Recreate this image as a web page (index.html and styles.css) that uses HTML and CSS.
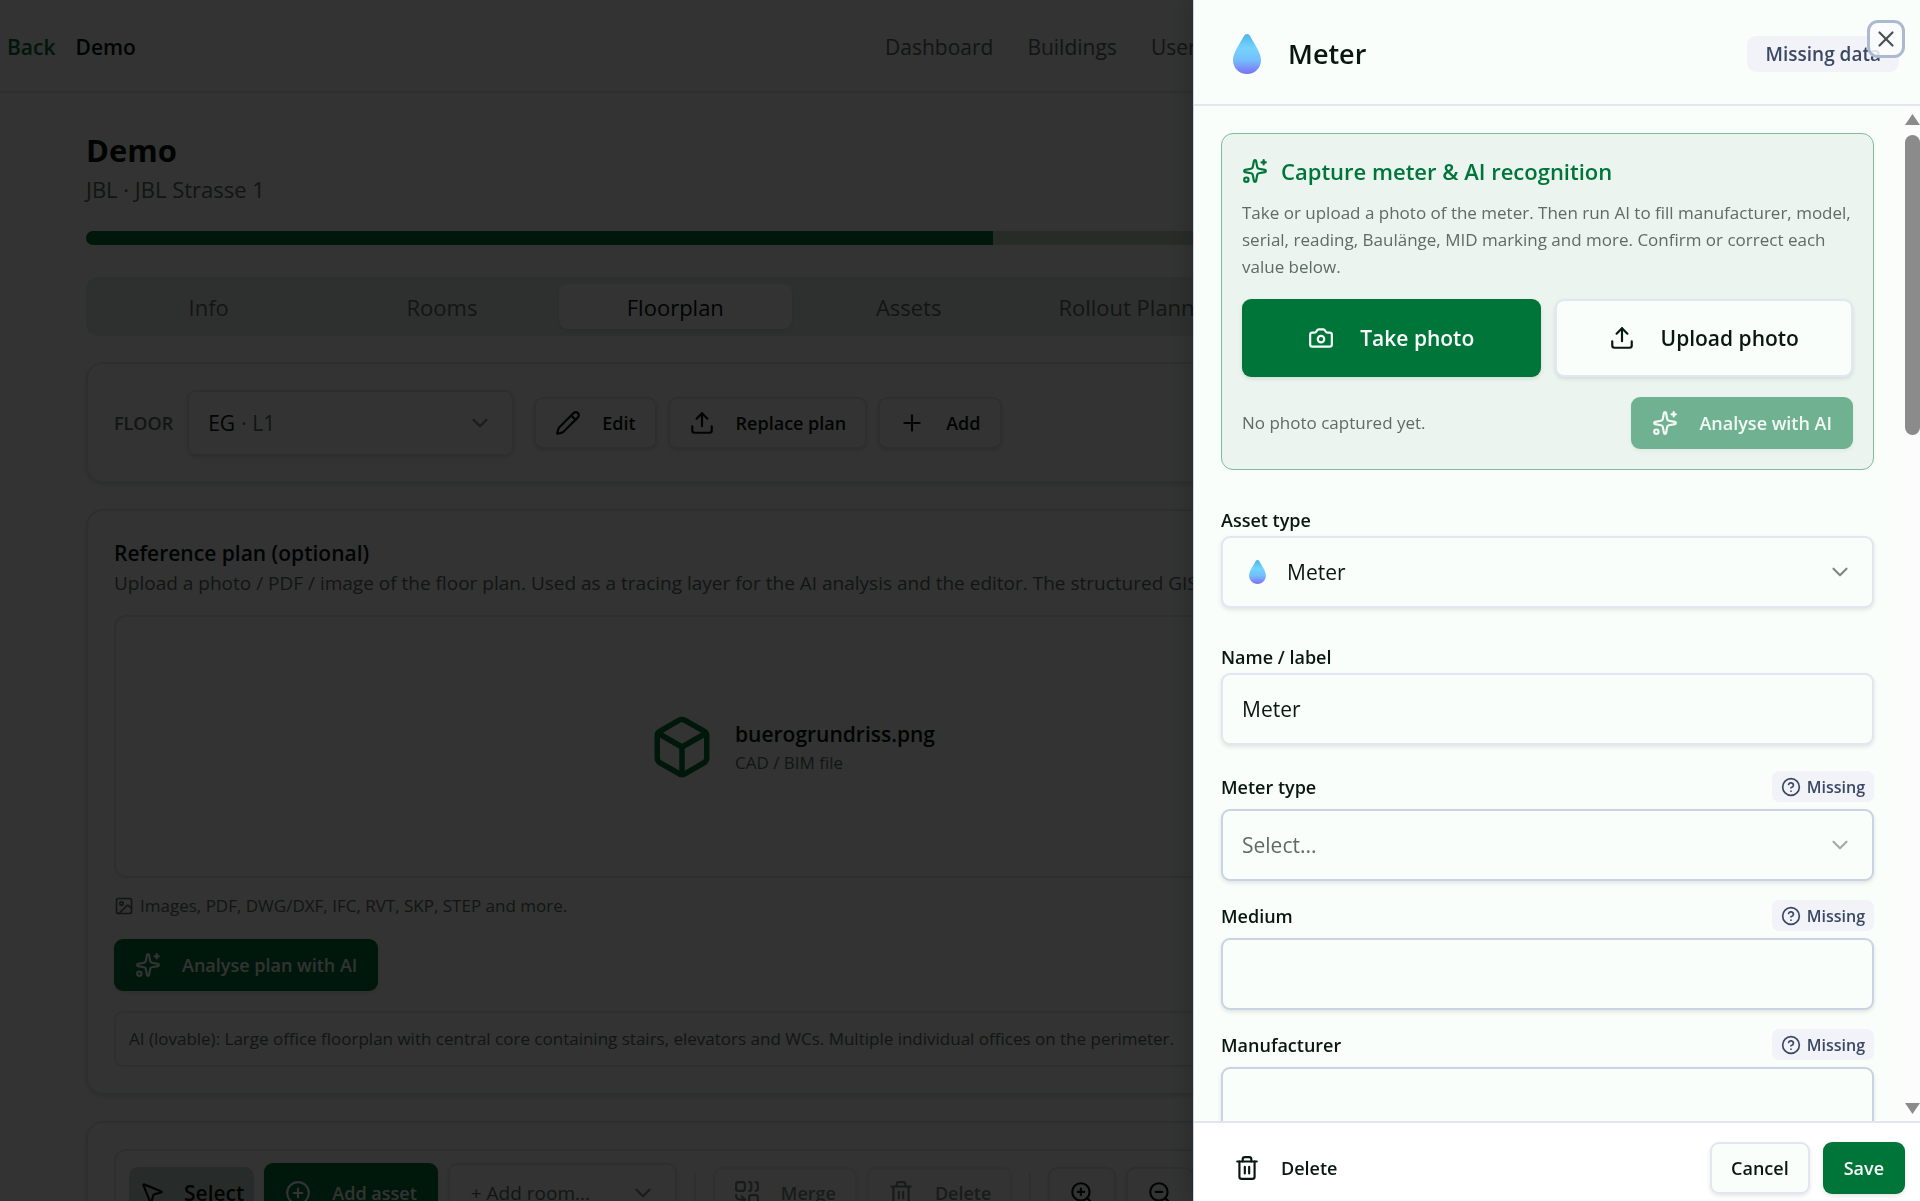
FILE: index.html
```html
<!DOCTYPE html>
<html lang="en">
<head>
<meta charset="utf-8">
<meta name="viewport" content="width=device-width, initial-scale=1">
<title>Demo – Floorplan</title>
<link rel="stylesheet" href="styles.css">
</head>
<body>
<svg class="sprite" aria-hidden="true">
  <symbol id="i-sparkles" viewBox="0 0 24 24"><path d="M11.017 2.814a1 1 0 0 1 1.966 0l1.051 5.558a2 2 0 0 0 1.594 1.594l5.558 1.051a1 1 0 0 1 0 1.966l-5.558 1.051a2 2 0 0 0-1.594 1.594l-1.051 5.558a1 1 0 0 1-1.966 0l-1.051-5.558a2 2 0 0 0-1.594-1.594l-5.558-1.051a1 1 0 0 1 0-1.966l5.558-1.051a2 2 0 0 0 1.594-1.594z"/><path d="M20 2v4"/><path d="M22 4h-4"/><circle cx="4" cy="20" r="2"/></symbol>
  <symbol id="i-camera" viewBox="0 0 24 24"><path d="M13.997 4a2 2 0 0 1 1.76 1.05l.486.9A2 2 0 0 0 18.003 7H20a2 2 0 0 1 2 2v9a2 2 0 0 1-2 2H4a2 2 0 0 1-2-2V9a2 2 0 0 1 2-2h1.997a2 2 0 0 0 1.759-1.048l.489-.904A2 2 0 0 1 10.004 4z"/><circle cx="12" cy="13" r="3"/></symbol>
  <symbol id="i-upload" viewBox="0 0 24 24"><path d="M12 3v12"/><path d="m17 8-5-5-5 5"/><path d="M21 15v4a2 2 0 0 1-2 2H5a2 2 0 0 1-2-2v-4"/></symbol>
  <symbol id="i-pencil" viewBox="0 0 24 24"><path d="M21.174 6.812a1 1 0 0 0-3.986-3.987L3.842 16.174a2 2 0 0 0-.5.83l-1.321 4.352a.5.5 0 0 0 .623.622l4.353-1.32a2 2 0 0 0 .83-.497z"/><path d="m15 5 4 4"/></symbol>
  <symbol id="i-plus" viewBox="0 0 24 24"><path d="M5 12h14"/><path d="M12 5v14"/></symbol>
  <symbol id="i-chevron" viewBox="0 0 24 24"><path d="m6 9 6 6 6-6"/></symbol>
  <symbol id="i-box" viewBox="0 0 24 24"><path d="M21 8a2 2 0 0 0-1-1.730l-7-4a2 2 0 0 0-2 0l-7 4A2 2 0 0 0 3 8v8a2 2 0 0 0 1 1.730l7 4a2 2 0 0 0 2 0l7-4A2 2 0 0 0 21 16Z"/><path d="m3.300 7 8.700 5 8.700-5"/><path d="M12 22V12"/></symbol>
  <symbol id="i-image" viewBox="0 0 24 24"><rect x="3" y="3" width="18" height="18" rx="2"/><circle cx="9" cy="9" r="2"/><path d="m21 15-3.086-3.086a2 2 0 0 0-2.828 0L6 21"/></symbol>
  <symbol id="i-pointer" viewBox="0 0 24 24"><path d="M4.037 4.688a.495.495 0 0 1 .651-.651l16 6.500a.5.5 0 0 1-.063.947l-6.124 1.580a2 2 0 0 0-1.438 1.435l-1.579 6.126a.5.5 0 0 1-.947.063z"/></symbol>
  <symbol id="i-circle-plus" viewBox="0 0 24 24"><circle cx="12" cy="12" r="10"/><path d="M8 12h8"/><path d="M12 8v8"/></symbol>
  <symbol id="i-combine" viewBox="0 0 24 24"><path d="M10 18H5a3 3 0 0 1-3-3v-1"/><path d="M14 2a2 2 0 0 1 2 2v4a2 2 0 0 1-2 2"/><path d="M20 2a2 2 0 0 1 2 2v4a2 2 0 0 1-2 2"/><path d="m7 21 3-3-3-3"/><rect x="14" y="14" width="8" height="8" rx="2"/><rect x="2" y="2" width="8" height="8" rx="2"/></symbol>
  <symbol id="i-trash" viewBox="0 0 24 24"><path d="M10 11v6"/><path d="M14 11v6"/><path d="M19 6v14a2 2 0 0 1-2 2H7a2 2 0 0 1-2-2V6"/><path d="M3 6h18"/><path d="M8 6V4a2 2 0 0 1 2-2h4a2 2 0 0 1 2 2v2"/></symbol>
  <symbol id="i-zoom-in" viewBox="0 0 24 24"><circle cx="11" cy="11" r="8"/><path d="m21 21-4.350-4.350"/><path d="M11 8v6"/><path d="M8 11h6"/></symbol>
  <symbol id="i-zoom-out" viewBox="0 0 24 24"><circle cx="11" cy="11" r="8"/><path d="m21 21-4.350-4.350"/><path d="M8 11h6"/></symbol>
  <symbol id="i-help" viewBox="0 0 24 24"><circle cx="12" cy="12" r="10"/><path d="M9.090 9a3 3 0 0 1 5.830 1c0 2-3 3-3 3"/><path d="M12 17h.01"/></symbol>
  <symbol id="i-close" viewBox="0 0 24 24"><path d="M18 6 6 18"/><path d="m6 6 12 12"/></symbol>
  <linearGradient id="drop-fill" x1="0" y1="0" x2="0" y2="1"><stop offset="0" stop-color="#4fb4ea"/><stop offset=".35" stop-color="#74d3fd"/><stop offset=".65" stop-color="#74bffd"/><stop offset="1" stop-color="#7a70f5"/></linearGradient>
  <symbol id="i-drop" viewBox="0 0 28 40"><path fill="url(#drop-fill)" stroke="none" d="M14 0c1.300 0 2.400.8 3.200 2.200C21 9.500 28 18.500 28 26c0 8-6 14-14 14S0 34 0 26C0 18.500 7 9.500 10.800 2.200 11.600.8 12.700 0 14 0z"/></symbol>
</svg>

<div class="page">
  <header class="topbar">
    <div class="brand"><a class="back" href="#">Back</a><span>Demo</span></div>
    <nav class="nav"><a href="#">Dashboard</a><a href="#">Buildings</a><a href="#">Users</a></nav>
  </header>
  <main class="content">
    <div>
      <h1 class="title">Demo</h1>
      <p class="address">JBL · JBL Strasse 1</p>
    </div>
    <div class="progress"><div class="progress-value" style="width:64.2%"></div></div>
    <div class="tabs" role="tablist">
      <button class="tab" role="tab">Info</button>
      <button class="tab" role="tab">Rooms</button>
      <button class="tab active" role="tab" aria-selected="true">Floorplan</button>
      <button class="tab" role="tab">Assets</button>
      <button class="tab" role="tab">Rollout Planning</button>
      <button class="tab" role="tab">Reports</button>
    </div>

    <section class="card floor-bar">
      <label class="floor-label" for="floor">FLOOR</label>
      <div class="select floor-select">
        <select id="floor"><option>EG</option></select>
        <span class="select-hint">· L1</span>
        <svg class="icon chevron"><use href="#i-chevron"/></svg>
      </div>
      <div class="actions">
        <button class="btn outline"><svg class="icon"><use href="#i-pencil"/></svg>Edit</button>
        <button class="btn outline"><svg class="icon"><use href="#i-upload"/></svg>Replace plan</button>
        <button class="btn outline"><svg class="icon"><use href="#i-plus"/></svg>Add</button>
      </div>
    </section>

    <section class="card plan">
      <h2 class="card-title">Reference plan (optional)</h2>
      <p class="card-text">Upload a photo / PDF / image of the floor plan. Used as a tracing layer for the AI analysis and the editor. The structured GIS model is stored.</p>
      <div class="preview">
        <svg class="icon box-icon"><use href="#i-box"/></svg>
        <div><p class="file-name">buerogrundriss.png</p><p class="file-kind">CAD / BIM file</p></div>
      </div>
      <p class="formats"><svg class="icon small"><use href="#i-image"/></svg>Images, PDF, DWG/DXF, IFC, RVT, SKP, STEP and more.</p>
      <button class="btn primary"><svg class="icon"><use href="#i-sparkles"/></svg>Analyse plan with AI</button>
      <p class="ai-note">AI (lovable): Large office floorplan with central core containing stairs, elevators and WCs. Multiple individual offices on the perimeter.</p>
    </section>

    <section class="card">
      <div class="toolbar">
        <button class="btn soft"><svg class="icon"><use href="#i-pointer"/></svg>Select</button>
        <button class="btn primary tall"><svg class="icon"><use href="#i-circle-plus"/></svg>Add asset</button>
        <div class="select room-select">
          <select aria-label="Add room"><option>+ Add room...</option></select>
          <svg class="icon chevron"><use href="#i-chevron"/></svg>
        </div>
        <span class="separator"></span>
        <button class="btn outline" disabled><svg class="icon"><use href="#i-combine"/></svg>Merge</button>
        <button class="btn outline" disabled><svg class="icon"><use href="#i-trash"/></svg>Delete</button>
        <span class="separator"></span>
        <button class="btn outline" aria-label="Zoom in"><svg class="icon"><use href="#i-zoom-in"/></svg></button>
        <button class="btn outline" aria-label="Zoom out"><svg class="icon"><use href="#i-zoom-out"/></svg></button>
      </div>
    </section>
  </main>
</div>

<div class="overlay"></div>

<aside class="drawer" role="dialog" aria-labelledby="drawer-title">
  <header class="drawer-head">
    <svg class="drop-large"><use href="#i-drop"/></svg>
    <h2 id="drawer-title">Meter</h2>
    <span class="status">Missing data</span>
    <button class="close" aria-label="Close"><svg class="icon"><use href="#i-close"/></svg></button>
  </header>

  <div class="drawer-main">
    <form class="drawer-body">
      <section class="capture">
        <h3><svg class="icon"><use href="#i-sparkles"/></svg>Capture meter &amp; AI recognition</h3>
        <p class="capture-text">Take or upload a photo of the meter. Then run AI to fill manufacturer, model, serial, reading, Baulänge, MID marking and more. Confirm or correct each value below.</p>
        <div class="capture-buttons">
          <button type="button" class="btn primary big"><svg class="icon"><use href="#i-camera"/></svg>Take photo</button>
          <button type="button" class="btn outline big"><svg class="icon"><use href="#i-upload"/></svg>Upload photo</button>
        </div>
        <div class="capture-foot">
          <span>No photo captured yet.</span>
          <button type="button" class="btn primary" disabled><svg class="icon"><use href="#i-sparkles"/></svg>Analyse with AI</button>
        </div>
      </section>

      <div class="field">
        <div class="field-head"><label for="asset-type">Asset type</label></div>
        <div class="select with-drop">
          <select id="asset-type"><option>Meter</option></select>
          <svg class="drop-small"><use href="#i-drop"/></svg>
          <svg class="icon chevron"><use href="#i-chevron"/></svg>
        </div>
      </div>
      <div class="field">
        <div class="field-head"><label for="name">Name / label</label></div>
        <input id="name" type="text" value="Meter">
      </div>
      <div class="field missing">
        <div class="field-head"><label for="meter-type">Meter type</label><span class="badge"><svg class="icon small"><use href="#i-help"/></svg>Missing</span></div>
        <div class="select placeholder">
          <select id="meter-type"><option>Select...</option></select>
          <svg class="icon chevron"><use href="#i-chevron"/></svg>
        </div>
      </div>
      <div class="field missing">
        <div class="field-head"><label for="medium">Medium</label><span class="badge"><svg class="icon small"><use href="#i-help"/></svg>Missing</span></div>
        <input id="medium" type="text">
      </div>
      <div class="field missing">
        <div class="field-head"><label for="manufacturer">Manufacturer</label><span class="badge"><svg class="icon small"><use href="#i-help"/></svg>Missing</span></div>
        <input id="manufacturer" type="text">
      </div>
    </form>
    <div class="scrollbar" aria-hidden="true">
      <span class="arrow up"></span>
      <span class="thumb"></span>
      <span class="arrow down"></span>
    </div>
  </div>

  <footer class="drawer-foot">
    <button class="btn ghost"><svg class="icon"><use href="#i-trash"/></svg>Delete</button>
    <button class="btn outline">Cancel</button>
    <button class="btn primary">Save</button>
  </footer>
</aside>
</body>
</html>
```
FILE: styles.css
```css
:root {
  --green: #00753a;
  --bg: #fafefb;
  --ink: #0a1711;
  --muted: #5f6b65;
  --line: #e2e6f0;
  --line-strong: #c8d3e3;
  --soft: #e6efeb;
  --slate: #3b4763;
  --text-xs: 17px;
  --text-sm: 18px;
  --text-md: 21px;
  --text-lg: 22px;
  --shadow: 0 2px 4px rgba(0, 0, 0, .1);
}

* { box-sizing: border-box; }

html, body { height: 100%; }

body {
  margin: 0;
  overflow: hidden;
  background: var(--bg);
  color: var(--ink);
  font: 400 21px/30px "Segoe UI", "Open Sans", "Noto Sans", sans-serif;
}

h1, h2, h3, p { margin: 0; }
a { color: inherit; text-decoration: none; }
button, input, select { font: inherit; color: inherit; }
.sprite { position: absolute; width: 0; height: 0; }

.icon {
  width: 26px;
  height: 26px;
  flex: none;
  fill: none;
  stroke: currentColor;
  stroke-width: 2;
  stroke-linecap: round;
  stroke-linejoin: round;
}
.icon.small { width: 20px; height: 20px; }

/* Buttons */
.btn {
  display: inline-flex;
  align-items: center;
  justify-content: center;
  gap: 21px;
  height: 52px;
  padding: 0 21px;
  border: 0;
  border-radius: 9px;
  background: none;
  font-size: var(--text-sm);
  font-weight: 600;
  white-space: nowrap;
}
.btn.primary { background: var(--green); color: #fafefb; box-shadow: var(--shadow); }
.btn.outline { background: var(--bg); border: 2px solid var(--line); padding: 0 19px; box-shadow: var(--shadow); }
.btn.soft { background: #c4dccf; }
.btn:disabled { opacity: .52; }
.btn.big { height: 78px; gap: 26px; font-size: var(--text-md); }

/* Fields */
.select { display: grid; align-items: center; }
.select > * { grid-area: 1 / 1; }
select, input {
  width: 100%;
  height: 72px;
  padding: 0 19px;
  border: 2px solid var(--line);
  border-radius: 9px;
  background: var(--bg);
  box-shadow: var(--shadow);
  appearance: none;
  outline: none;
}
.chevron { justify-self: end; margin-right: 21px; opacity: .5; pointer-events: none; }
.missing select, .missing input { border-color: var(--line-strong); }
.placeholder select { color: var(--muted); }
.placeholder .chevron { opacity: .35; }
.with-drop select { padding-left: 64px; }
.drop-small { width: 17px; height: 24px; margin-left: 28px; pointer-events: none; }

/* Page behind the drawer */
.page { padding-right: 336px; }
.topbar {
  display: grid;
  grid-template-columns: 878px 1fr;
  align-items: center;
  height: 93px;
  margin-right: -336px;
  padding: 2px 0 0 7px;
  border-bottom: 2px solid var(--line);
}
.brand { display: flex; gap: 20px; font-weight: 600; }
.back { color: var(--green); }
.nav { display: flex; gap: 34px; color: var(--muted); }

.content { padding: 38px 86px; display: flex; flex-direction: column; gap: 26px; }
.title { font-size: 31px; line-height: 38px; font-weight: 700; }
.address { margin-top: 4px; font-size: var(--text-lg); line-height: 32px; color: var(--muted); }
.progress { height: 14px; border-radius: 7px; background: #c8dccd; overflow: hidden; }
.progress-value { height: 100%; background: var(--green); }
.tabs {
  display: grid;
  grid-template-columns: repeat(6, minmax(0, 1fr));
  height: 59px;
  margin-top: 6px;
  padding: 7px 6px;
  border-radius: 12px;
  background: var(--soft);
}
.tab { border: 0; padding: 0; border-radius: 9px; background: none; color: var(--muted); font-size: var(--text-lg); font-weight: 500; }
.tab.active { background: var(--bg); color: var(--ink); box-shadow: var(--shadow); }

.card { padding: 26px; border: 2px solid var(--line); border-radius: 17px; background: var(--bg); box-shadow: var(--shadow); }
.floor-bar { display: flex; align-items: center; height: 121px; }
.floor-label { font-size: var(--text-sm); font-weight: 600; color: var(--muted); margin-right: 14px; }
.floor-select { width: 327px; }
.floor-select select { height: 66px; }
.select-hint { margin-left: 54px; color: var(--muted); pointer-events: none; }
.actions { display: flex; gap: 11px; margin-left: 20px; }

.plan { display: flex; flex-direction: column; align-items: flex-start; height: 586px; }
.card-title { font-size: var(--text-md); font-weight: 600; line-height: 32px; }
.card-text { overflow: hidden; width: 100%; white-space: nowrap; font-size: 19px; line-height: 28px; color: var(--muted); }
.preview {
  display: flex;
  align-items: center;
  justify-content: center;
  gap: 20px;
  align-self: stretch;
  height: 265px;
  margin: 18px 0 14px;
  border: 2px solid var(--line);
  border-radius: 12px;
}
.box-icon { width: 66px; height: 66px; color: var(--green); }
.file-name { font-weight: 600; line-height: 32px; }
.file-kind { font-size: var(--text-xs); line-height: 26px; color: var(--muted); }
.formats { display: flex; align-items: center; gap: 6px; margin-bottom: 19px; font-size: var(--text-xs); line-height: 28px; color: var(--muted); }
.ai-note {
  align-self: stretch;
  margin-top: 20px;
  padding: 12px 13px;
  border: 2px solid var(--line);
  border-radius: 9px;
  font-size: var(--text-xs);
  line-height: 28px;
  color: var(--muted);
}
.toolbar {
  display: flex;
  align-items: center;
  gap: 10px;
  padding: 12px 13px;
  border: 2px solid var(--line);
  border-radius: 12px;
}
.btn.soft { padding: 0 10px; gap: 19px; font-size: var(--text-md); }
.btn.tall { height: 60px; }
.room-select { width: 229px; }
.room-select select { height: 60px; padding: 0 21px; font-size: 19px; color: var(--muted); }
.separator { width: 2px; height: 40px; margin: 0 7px; background: var(--line); }

.overlay { position: fixed; inset: 0; background: rgba(0, 0, 0, .8); }

/* Drawer */
.drawer {
  position: fixed;
  inset: 0 0 0 auto;
  display: flex;
  flex-direction: column;
  width: 727px;
  border-left: 1px solid var(--line-strong);
  background: var(--bg);
  box-shadow: -4px 0 24px rgba(0, 0, 0, .2);
}
.drawer-head {
  display: flex;
  align-items: center;
  flex: none;
  height: 106px;
  padding: 4px 21px 0 39px;
  border-bottom: 2px solid var(--line);
}
.drop-large { width: 28px; height: 40px; margin-right: 27px; }
.drawer-head h2 { font-size: 27px; line-height: 36px; font-weight: 600; }
.status {
  margin-left: auto;
  padding: 4px 18px;
  border-radius: 9px;
  background: #f1f3f9;
  color: var(--slate);
  font-size: 19px;
  font-weight: 600;
  line-height: 28px;
}
.close {
  position: absolute;
  top: 20px;
  right: 15px;
  display: grid;
  place-items: center;
  width: 38px;
  height: 38px;
  padding: 0;
  border: 3px solid #adb9cf;
  border-radius: 11px;
  background: rgba(250, 252, 253, .85);
  color: #4a524e;
}

.drawer-main { display: flex; flex: 1; min-height: 0; }
.drawer-body { flex: 1; min-width: 0; padding: 27px 28px 0 27px; overflow: hidden; }
.capture { padding: 22px 20px 20px; border: 1px solid #80bb9c; border-radius: 12px; background: #ebf4ef; margin-bottom: 33px; }
.capture h3 { display: flex; align-items: center; gap: 13px; font-size: var(--text-lg); line-height: 30px; font-weight: 600; color: var(--green); }
.capture-text { margin: 13px 0 19px; font-size: var(--text-xs); line-height: 27px; color: var(--muted); }
.capture-buttons { display: grid; grid-template-columns: 1fr 1fr; gap: 14px; }
.capture-foot { display: flex; align-items: center; justify-content: space-between; margin-top: 20px; font-size: var(--text-xs); color: var(--muted); }

.field { margin-bottom: 32px; }
.field-head { display: flex; align-items: center; justify-content: space-between; height: 33px; font-size: var(--text-sm); font-weight: 600; }
.field.missing { margin-bottom: 19px; }
.field.missing .field-head { height: 38px; padding-bottom: 7px; }
.field:not(.missing):has(+ .missing) { margin-bottom: 26px; }
.badge {
  display: flex;
  align-items: center;
  gap: 6px;
  height: 31px;
  padding: 0 9px;
  border-radius: 7px;
  background: #f1f3f9;
  color: var(--slate);
  font-size: 16px;
}

.scrollbar { display: flex; flex-direction: column; align-items: flex-end; width: 18px; padding: 8px 0 7px; background: #fcfcfc; }
.arrow { width: 15px; height: 11px; background: #8b8b8b; clip-path: polygon(50% 0, 100% 100%, 0 100%); }
.arrow.down { margin-top: auto; clip-path: polygon(0 0, 100% 0, 50% 100%); }
.thumb { width: 15px; height: 30%; margin-top: 10px; border-radius: 8px; background: #8b8b8b; }

.drawer-foot {
  display: flex;
  align-items: center;
  flex: none;
  gap: 13px;
  height: 80px;
  padding: 12px 15px 0 19px;
  border-top: 2px solid var(--line);
  background: #fff;
}
.drawer-foot .ghost { margin-right: auto; }
```
